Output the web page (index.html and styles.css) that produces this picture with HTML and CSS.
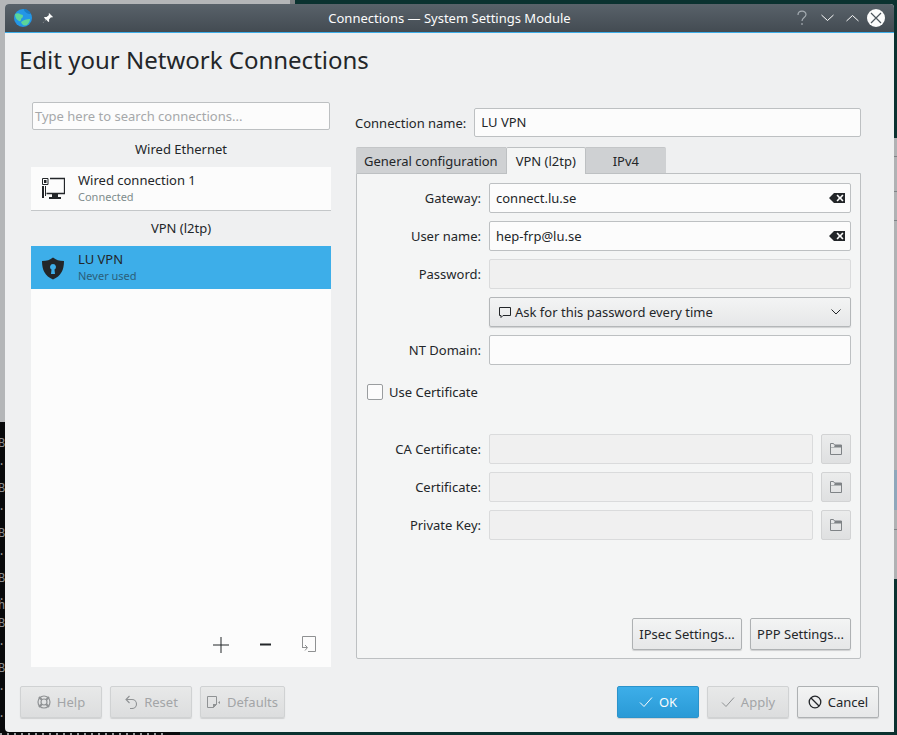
FILE: index.html
```html
<!DOCTYPE html>
<html>
<head>
    <meta charset="utf-8">
    <title>Connections — System Settings Module</title>
    <link rel="stylesheet" href="styles.css">
</head>
<body>
    <!-- desktop behind the dialog -->
    <div class="desk-window"></div>
    <div class="desk-edge"></div>
    <pre class="desk-terminal">


B

.


B

.


B

.


B

.
h

B

.


B

.


.</pre>
    <div class="desk-dots"></div>
    <div class="desk-right"></div>

    <div class="window">
        <div class="titlebar">
            <div class="title-left">
                <svg class="globe" width="18" height="18" viewBox="0 0 18 18">
                    <circle cx="9" cy="9" r="9" fill="#2496e6"/>
                    <path d="M1 5c2-1 4-1 5 0s3 0 3 2-2 2-2 3 0 3-2 2-4-3-4-7z" fill="#5cd69a"/>
                    <path d="M7 13c2-2 6-3 9-3 0 2-1 4-3 6-3 1-5 0-6-3z" fill="#5cd69a"/>
                    <path d="M10 0c3 0 6 2 7 5-2 0-4-.5-5-1.500S10 2 10 0z" fill="#1a7cc6"/>
                </svg>
                <svg class="pin" width="12" height="12" viewBox="0 0 12 12">
                    <path d="M7 1l4 4-1 .6-1-.3-2 2.200.2 2L6.400 10 4 7.600 1 11 .8 10.800 4 8 2 5.600l.6-.7 2 .2L7 3 6.700 2z" fill="#fcfcfc"/>
                </svg>
            </div>
            <div class="title-text">Connections — System Settings Module</div>
            <div class="title-buttons">
                <svg width="14" height="16" viewBox="0 0 14 16"><path d="M3 5c0-5 8-5 8-.5 0 3-4 3-4 6.500M7 13v2" fill="none" stroke="#a4abb1" stroke-width="1.200"/></svg>
                <svg width="13" height="8" viewBox="0 0 13 8"><path d="M.5 1L6.500 6.500 12.500 1" fill="none" stroke="#fcfcfc" stroke-width="1"/></svg>
                <svg width="13" height="8" viewBox="0 0 13 8"><path d="M.5 7L6.500 1.500 12.500 7" fill="none" stroke="#fcfcfc" stroke-width="1"/></svg>
                <span class="close-btn">
                    <svg width="18" height="18" viewBox="0 0 18 18"><circle cx="9" cy="9" r="9" fill="#fcfcfc"/><path d="M4 4l10 10M14 4L4 14" stroke="#4d565d" stroke-width="1.200"/></svg>
                </span>
            </div>
        </div>

        <div class="content">
            <h1>Edit your Network Connections</h1>

            <div class="columns">
                <div class="sidebar">
                    <div class="search">Type here to search connections...</div>
                    <div class="section-name first">Wired Ethernet</div>
                    <div class="conn wired">
                        <svg width="24" height="24" viewBox="0 0 24 24">
                            <path d="M1.500 1.500h5.500v6H1.500z" fill="none" stroke="#232629"/>
                            <path d="M3 3h2.500v3H3z" fill="#232629"/>
                            <path d="M9 1.500h14.500v15H5.500" fill="none" stroke="#232629" stroke-width="1.300"/>
                            <path d="M1 9h2v12H1zM4 9h1v10H4z" fill="#232629"/>
                            <path d="M11 17h6v3h3v2H8v-2h3z" fill="#232629"/>
                        </svg>
                        <div class="conn-text">
                            <div class="conn-name">Wired connection 1</div>
                            <div class="conn-state">Connected</div>
                        </div>
                    </div>
                    <div class="section-name">VPN (l2tp)</div>
                    <div class="conn selected">
                        <svg width="24" height="24" viewBox="0 0 24 24">
                            <path fill-rule="evenodd" d="M12 1.500C15 4 18 5 23 5c0 9-3 15-11 18.500C4 20 1 14 1 5c5 0 8-1 11-3.500zM12 8a3 3 0 0 0-1.500 5.600L10 18h4l-.5-4.400A3 3 0 0 0 12 8z" fill="#232629"/>
                        </svg>
                        <div class="conn-text">
                            <div class="conn-name">LU VPN</div>
                            <div class="conn-state">Never used</div>
                        </div>
                    </div>
                    <div class="list-rest">
                        <svg width="16" height="16" viewBox="0 0 16 16"><path d="M0 8h16M8 0v16" stroke="#232629" stroke-width="1"/></svg>
                        <svg width="16" height="16" viewBox="0 0 16 16"><path d="M3 7.500h11" stroke="#232629" stroke-width="2"/></svg>
                        <svg width="16" height="18" viewBox="0 0 16 18"><path d="M1.500 12V1.500h13v15H7M1 12.500h5M4 10l2.500 2.500L4 15.500" fill="none" stroke="#8f9192" stroke-width="1"/></svg>
                    </div>
                </div>

                <div class="editor">
                    <div class="name-row">
                        <label>Connection name:</label>
                        <div class="field">LU VPN</div>
                    </div>
                    <div class="tabs">
                        <div class="tab">General configuration</div>
                        <div class="tab active">VPN (l2tp)</div>
                        <div class="tab last">IPv4</div>
                    </div>
                    <div class="panel">
                        <div class="form">
                            <label>Gateway:</label>
                            <div class="field">connect.lu.se
                                <svg class="clear" width="16" height="12" viewBox="0 0 16 12"><path fill-rule="evenodd" d="M5 1h11v10H5L0 6zM7.500 3.500L9.800 6 7.500 8.500l1.200 1L11 7l2.300 2.500 1.200-1L12.200 6l2.300-2.500-1.200-1L11 5 8.700 2.500z" fill="#232629"/></svg>
                            </div>
                            <label>User name:</label>
                            <div class="field">hep-frp@lu.se
                                <svg class="clear" width="16" height="12" viewBox="0 0 16 12"><path fill-rule="evenodd" d="M5 1h11v10H5L0 6zM7.500 3.500L9.800 6 7.500 8.500l1.200 1L11 7l2.300 2.500 1.200-1L12.200 6l2.300-2.500-1.200-1L11 5 8.700 2.500z" fill="#232629"/></svg>
                            </div>
                            <label>Password:</label>
                            <div class="field off"></div>
                            <span></span>
                            <div class="combo">
                                <svg width="14" height="14" viewBox="0 0 14 14"><path d="M1.500 2.500h11v8H5L3 12.500v-2H1.500z" fill="none" stroke="#232629"/></svg>
                                <span>Ask for this password every time</span>
                                <svg class="arrow" width="10" height="6" viewBox="0 0 10 6"><path d="M.5.500L5 5l4.500-4.500" fill="none" stroke="#232629"/></svg>
                            </div>
                            <label>NT Domain:</label>
                            <div class="field"></div>
                        </div>

                        <div class="check-row"><span class="check"></span>Use Certificate</div>

                        <div class="form certs">
                            <label>CA Certificate:</label>
                            <div class="file-row"><div class="field off"></div><div class="folder-btn"><svg width="12" height="12" viewBox="0 0 12 12"><path d="M.5.500h3l1 1.500h7v9.500H.5z" fill="none" stroke="#7f8386"/><path d="M5 2h7v2.500H0V4h4z" fill="#7f8386"/></svg></div></div>
                            <label>Certificate:</label>
                            <div class="file-row"><div class="field off"></div><div class="folder-btn"><svg width="12" height="12" viewBox="0 0 12 12"><path d="M.5.500h3l1 1.500h7v9.500H.5z" fill="none" stroke="#7f8386"/><path d="M5 2h7v2.500H0V4h4z" fill="#7f8386"/></svg></div></div>
                            <label>Private Key:</label>
                            <div class="file-row"><div class="field off"></div><div class="folder-btn"><svg width="12" height="12" viewBox="0 0 12 12"><path d="M.5.500h3l1 1.500h7v9.500H.5z" fill="none" stroke="#7f8386"/><path d="M5 2h7v2.500H0V4h4z" fill="#7f8386"/></svg></div></div>
                        </div>

                        <div class="panel-buttons">
                            <div class="btn ipsec">IPsec Settings...</div>
                            <div class="btn ppp">PPP Settings...</div>
                        </div>
                    </div>
                </div>
            </div>

            <div class="footer">
                <div class="btn off">
                    <svg width="14" height="14" viewBox="0 0 14 14"><circle cx="7" cy="7" r="6" fill="none" stroke="#8f9294" stroke-width="1.200"/><circle cx="7" cy="7" r="3" fill="none" stroke="#8f9294" stroke-width="1.200"/><path d="M2 2l3 3M12 2L9 5M2 12l3-3M12 12L9 9" stroke="#8f9294" stroke-width="2"/></svg>
                    Help
                </div>
                <div class="btn off">
                    <svg width="14" height="14" viewBox="0 0 14 14"><path d="M5.500 1L2 4.500 5.500 8M2.500 4.500H8a4.500 4.500 0 0 1 0 9H6" fill="none" stroke="#8f9294" stroke-width="1.100"/></svg>
                    Reset
                </div>
                <div class="btn off defaults">
                    <svg width="15" height="14" viewBox="0 0 15 14"><path d="M.5 1.500h9v8l-3 3h-6z" fill="none" stroke="#8f9294"/><path d="M6 13V9h4zM11 7.500l2-1.500v3z" fill="#8f9294"/></svg>
                    Defaults
                </div>
                <div class="footer-gap"></div>
                <div class="btn primary">
                    <svg width="14" height="12" viewBox="0 0 14 12"><path d="M1 6.500L5 10.500 13 1.500" fill="none" stroke="#fcfcfc" stroke-width="1"/></svg>
                    OK
                </div>
                <div class="btn off">
                    <svg width="14" height="12" viewBox="0 0 14 12"><path d="M1 6.500L5 10.500 13 1.500" fill="none" stroke="#8f9294" stroke-width="1"/></svg>
                    Apply
                </div>
                <div class="btn">
                    <svg width="14" height="14" viewBox="0 0 14 14"><circle cx="7" cy="7" r="5.800" fill="none" stroke="#232629" stroke-width="1.300"/><path d="M3 3l8 8" stroke="#232629" stroke-width="1.300"/></svg>
                    Cancel
                </div>
            </div>
        </div>
    </div>
</body>
</html>
```

FILE: styles.css
```css
html, body {
    margin: 0;
    height: 735px;
    overflow: hidden;
}

body {
    position: relative;
    background: #0b3230;
    font-family: "Noto Sans", sans-serif;
    font-size: 13px;
    color: #232629;
}

/* other windows peeking out around the dialog */
.desk-window {
    position: absolute;
    left: 0;
    top: 0;
    width: 290px;
    height: 422px;
    background: #b4b6b8;
}

.desk-edge {
    position: absolute;
    left: 290px;
    top: 0;
    width: 5px;
    height: 4px;
    background: #7d8083;
}

.desk-terminal {
    position: absolute;
    left: -2px;
    top: 422px;
    width: 182px;
    height: 313px;
    margin: 0;
    background: #08090b;
    color: #8d8f90;
    font-family: "Liberation Mono", monospace;
    font-size: 12px;
    line-height: 9px;
    overflow: hidden;
}

.desk-dots {
    position: absolute;
    left: 0;
    top: 733px;
    width: 165px;
    height: 2px;
    background: repeating-linear-gradient(90deg, #9a9c9d 0 2px, #08090b 2px 7px);
}

.desk-right {
    position: absolute;
    left: 894px;
    top: 138px;
    width: 3px;
    height: 441px;
    background:
        linear-gradient(#7f8386, #7f8386) 0 18px / 3px 1px no-repeat,
        linear-gradient(#7f8386, #7f8386) 0 53px / 3px 1px no-repeat,
        linear-gradient(#7f8386, #7f8386) 0 82px / 3px 1px no-repeat,
        linear-gradient(#7f8386, #7f8386) 0 391px / 3px 1px no-repeat,
        linear-gradient(#8ea7bb, #8ea7bb) 0 332px / 3px 40px no-repeat,
        #b0b2b4;
}

.window {
    position: absolute;
    left: 5px;
    top: 4px;
    width: 889px;
    height: 728px;
    background: #eff0f1;
    border-radius: 4px 4px 0 4px;
    display: flex;
    flex-direction: column;
    overflow: hidden;
}

.titlebar {
    height: 28px;
    flex: none;
    display: grid;
    grid-template-columns: 1fr auto 1fr;
    align-items: center;
    background: linear-gradient(#59626a, #434b52);
    border-bottom: 1px solid #3daee9;
    color: #fcfcfc;
}

.title-left {
    display: flex;
    align-items: center;
    gap: 10px;
    padding-left: 9px;
}

.title-text {
    text-align: center;
    white-space: nowrap;
}

.title-buttons {
    display: flex;
    align-items: center;
    justify-content: flex-end;
    gap: 12px;
    padding-right: 9px;
}

.close-btn {
    display: flex;
    margin-left: -4px;
}

.content {
    flex: 1;
    display: flex;
    flex-direction: column;
    padding: 0 15px 14px 15px;
}

h1 {
    margin: 10px 0 0 -1px;
    font-size: 24px;
    font-weight: 400;
    line-height: 33px;
    height: 33px;
}

.columns {
    display: flex;
    margin-top: 26px;
    height: 565px;
}

.sidebar {
    width: 300px;
    margin-left: 11px;
    display: flex;
    flex-direction: column;
}

.search {
    margin: 0 1px;
    height: 26px;
    line-height: 26px;
    padding-left: 2px;
    background: #fcfcfc;
    border: 1px solid #bdc0c2;
    border-radius: 2px;
    color: #a6a8aa;
    white-space: nowrap;
}

.section-name {
    height: 35px;
    line-height: 34px;
    text-align: center;
}

.section-name.first {
    height: 37px;
    line-height: 39px;
}

.conn {
    height: 43px;
    display: flex;
    align-items: center;
    gap: 13px;
    padding-left: 10px;
    background: #fcfcfc;
}

.conn.wired {
    border-bottom: 1px solid #c4c7c9;
}

.conn.selected {
    background: #3daee9;
}

.conn-text {
    padding-bottom: 2px;
}

.conn-name {
    line-height: 17px;
}

.conn-state {
    font-size: 11px;
    line-height: 15px;
    color: #7f8c8d;
}

.selected .conn-state {
    color: #2b5e7a;
}

.list-rest {
    flex: 1;
    background: #fcfcfc;
    display: flex;
    justify-content: flex-end;
    align-items: flex-end;
    gap: 28px;
    padding: 0 14px 14px 0;
}

.editor {
    width: 506px;
    margin-left: 24px;
    padding-bottom: 8px;
    display: flex;
    flex-direction: column;
}

.name-row {
    display: flex;
    align-items: center;
    gap: 8px;
    margin-top: 6px;
}

.name-row .field {
    flex: 1;
    height: 27px;
    line-height: 27px;
}

.field {
    position: relative;
    height: 28px;
    line-height: 28px;
    padding-left: 6px;
    background: #fcfcfc;
    border: 1px solid #bdc0c2;
    border-radius: 2px;
    box-sizing: content-box;
}

.field.off {
    background: #f0f0f0;
    border-color: #dadbdc;
}

.clear {
    position: absolute;
    right: 5px;
    top: 8px;
}

.tabs {
    display: flex;
    margin-top: 10px;
    height: 26px;
    padding-left: 1px;
}

.tab {
    background: #cfd1d3;
    line-height: 27px;
    padding: 0 8px;
    border-top: 1px solid #c4c6c8;
    box-sizing: border-box;
    border-radius: 2px 0 0 0;
    white-space: nowrap;
}

.tab.active {
    background: #f4f5f5;
    border: 1px solid #bdc0c2;
    border-bottom: none;
    border-radius: 2px 2px 0 0;
    height: 27px;
    padding: 0 9px;
    position: relative;
    z-index: 1;
}

.tab.last {
    width: 80px;
    text-align: center;
    border-radius: 0 2px 0 0;
}

.panel {
    flex: 1;
    margin-left: 1px;
    background: #f4f5f5;
    border: 1px solid #bdc0c2;
    border-radius: 0 0 2px 2px;
    padding: 9px 9px 8px 0;
    display: flex;
    flex-direction: column;
}

.form {
    display: grid;
    grid-template-columns: 124px 1fr;
    column-gap: 8px;
    row-gap: 8px;
    align-items: center;
}

.form label {
    text-align: right;
}

.combo {
    height: 30px;
    display: flex;
    align-items: center;
    gap: 3px;
    padding: 0 9px 0 8px;
    background: linear-gradient(#f3f4f4, #e6e7e8);
    border: 1px solid #b4b7b9;
    border-radius: 2px;
    box-shadow: 0 1px 1px #d0d1d2;
    box-sizing: border-box;
}

.combo span {
    flex: 1;
}

.check-row {
    display: flex;
    align-items: center;
    gap: 6px;
    margin: 18px 0 0 10px;
    height: 18px;
}

.check {
    width: 14px;
    height: 14px;
    background: #fcfcfc;
    border: 1px solid #9a9d9f;
    border-radius: 2px;
}

.certs {
    margin-top: 33px;
}

.file-row {
    display: flex;
    gap: 8px;
}

.file-row .field {
    flex: 1;
}

.folder-btn {
    width: 30px;
    height: 30px;
    flex: none;
    display: flex;
    align-items: center;
    justify-content: center;
    background: linear-gradient(#ebecec, #dfe0e1);
    border: 1px solid #d2d3d4;
    border-radius: 2px;
    box-sizing: border-box;
}

.panel-buttons {
    margin-top: auto;
    display: flex;
    justify-content: flex-end;
    gap: 8px;
}

.btn {
    height: 32px;
    width: 82px;
    box-sizing: border-box;
    display: flex;
    align-items: center;
    justify-content: center;
    gap: 6px;
    background: linear-gradient(#f3f4f4, #e6e7e8);
    border: 1px solid #aeb1b3;
    border-radius: 2px;
    box-shadow: 0 1px 1px #cfd0d1;
    white-space: nowrap;
}

.btn.ipsec {
    width: 110px;
}

.btn.ppp {
    width: 101px;
}

.btn.off {
    background: linear-gradient(#e8e9e9, #dcddde);
    border-color: #d0d2d3;
    color: #a3a5a7;
}

.btn.defaults {
    width: 85px;
    gap: 5px;
}

.btn.primary {
    background: linear-gradient(#3daee9, #2a9ad6);
    border-color: #2b93cb;
    color: #fcfcfc;
}

.footer {
    display: flex;
    gap: 8px;
    margin-top: 19px;
}

.footer-gap {
    flex: 1;
}
```
